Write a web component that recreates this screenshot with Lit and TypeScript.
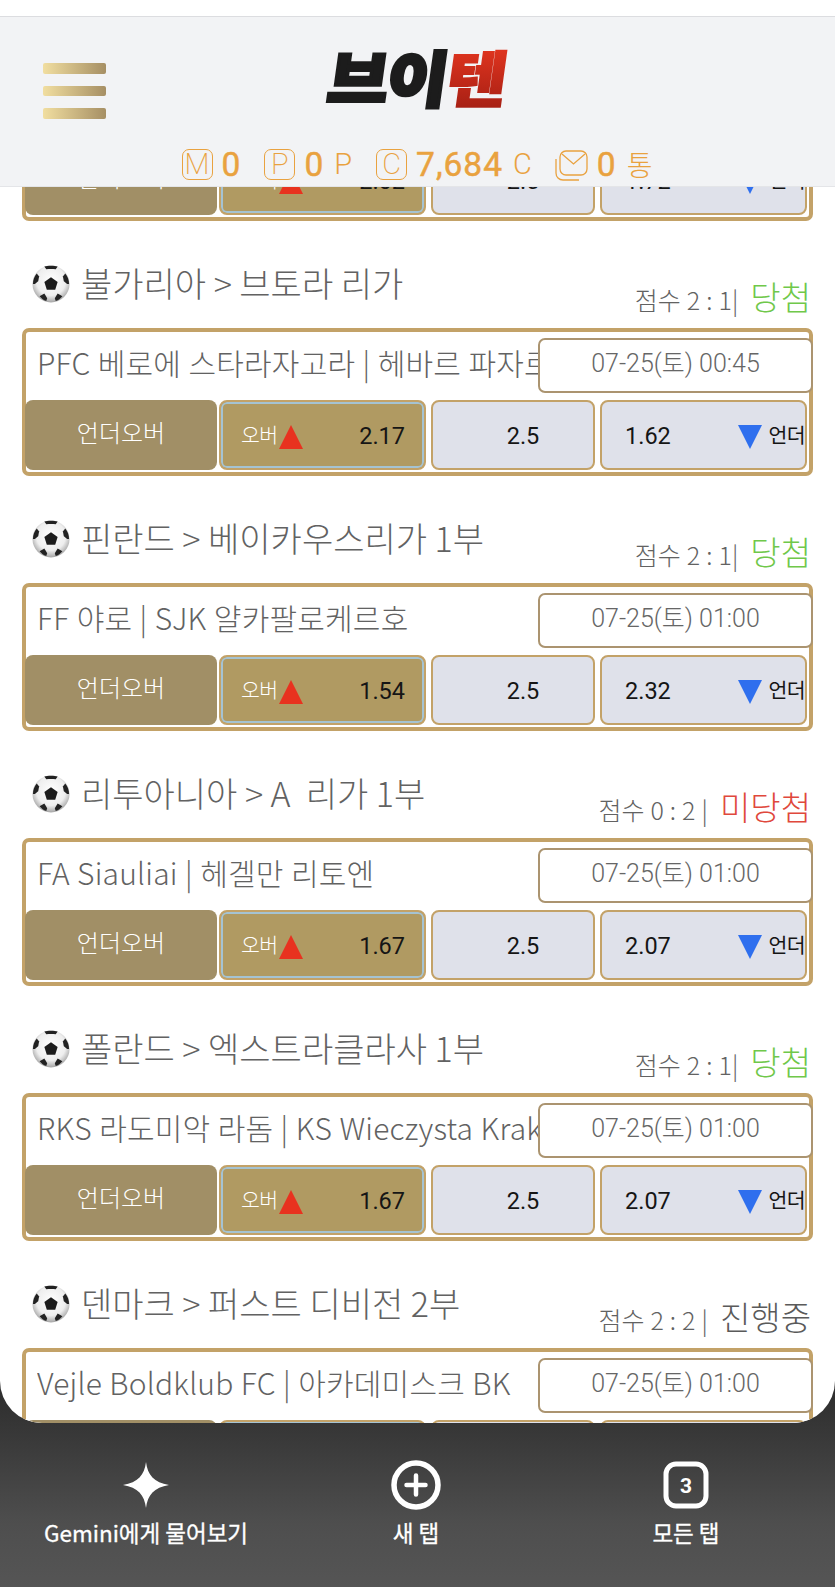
import { LitElement, html, css, svg } from "lit";
import { customElement } from "lit/decorators.js";

interface Match {
  league: string;
  score: string;
  result: string;
  kind: "win" | "lose" | "live";
  teams: string;
  date: string;
  over: string;
  line: string;
  under: string;
}

const MATCHES: Match[] = [
  { league: "", score: "", result: "", kind: "win", teams: "", date: "", over: "2.02", line: "2.5", under: "1.72" },
  { league: "불가리아 > 브토라 리가", score: "점수 2 : 1", result: "당첨", kind: "win", teams: "PFC 베로에 스타라자고라 | 헤바르 파자르", date: "07-25(토) 00:45", over: "2.17", line: "2.5", under: "1.62" },
  { league: "핀란드 > 베이카우스리가 1부", score: "점수 2 : 1", result: "당첨", kind: "win", teams: "FF 야로 | SJK 얄카팔로케르호", date: "07-25(토) 01:00", over: "1.54", line: "2.5", under: "2.32" },
  { league: "리투아니아 > A  리가 1부", score: "점수 0 : 2", result: "미당첨", kind: "lose", teams: "FA Siauliai | 헤겔만 리토엔", date: "07-25(토) 01:00", over: "1.67", line: "2.5", under: "2.07" },
  { league: "폴란드 > 엑스트라클라사 1부", score: "점수 2 : 1", result: "당첨", kind: "win", teams: "RKS 라도미악 라돔 | KS Wieczysta Krakow", date: "07-25(토) 01:00", over: "1.67", line: "2.5", under: "2.07" },
  { league: "덴마크 > 퍼스트 디비전 2부", score: "점수 2 : 2", result: "진행중", kind: "live", teams: "Vejle Boldklub FC | 아카데미스크 BK", date: "07-25(토) 01:00", over: "1.67", line: "2.5", under: "2.07" },
];

const ball = svg`
  <svg class="ball" viewBox="0 0 40 40" aria-hidden="true">
    <defs>
      <radialGradient id="bg" cx="50%" cy="42%" r="60%">
        <stop offset="0%" stop-color="#ffffff"/><stop offset="65%" stop-color="#eeeeee"/><stop offset="100%" stop-color="#9c9c9c"/>
      </radialGradient>
    </defs>
    <circle cx="20" cy="20" r="19.5" fill="url(#bg)"/>
    <path d="M20 13l7 5-2.600 8h-8.800L13 18z" fill="#1c1c1c"/>
    <path d="M13 1.600C16 .6 24 .6 27 1.600L25 4.600C22 4 18 4 15 4.600z" fill="#222"/>
    <path d="M1 20C1 16 2.500 12 5 9L7.500 12 6.500 17 3 20z" fill="#222"/>
    <path d="M39 20C39 16 37.500 12 35 9L32.500 12 33.500 17 37 20z" fill="#222"/>
    <path d="M8 33L13 30 16 35 15 38C12 37 10 35.500 8 33z" fill="#222"/>
    <path d="M32 33L27 30 24 35 25 38C28 37 30 35.500 32 33z" fill="#222"/>
  </svg>`;

@customElement("match-card")
class MatchCard extends LitElement {
  static properties = { m: { attribute: false } };
  m!: Match;

  static styles = css`
    :host {
      display: block;
      padding: 0 22px;
      height: 255px;
      font-family: "Noto Sans CJK KR", "Roboto", sans-serif;
      font-weight: 300;
      color: #626262;
    }
    .head {
      height: 107px;
      box-sizing: border-box;
      display: flex;
      justify-content: space-between;
      padding: 44px 2px 0 10px;
    }
    .league {
      display: flex;
      align-items: flex-start;
      gap: 11px;
      font-size: 34px;
      line-height: 36px;
      white-space: pre;
    }
    .ball {
      width: 38px;
      height: 38px;
      flex: none;
    }
    .score {
      align-self: flex-end;
      margin-bottom: 7px;
      display: flex;
      align-items: baseline;
      font-size: 25px;
      line-height: 44px;
      white-space: pre;
      word-spacing: 0.5px;
    }
    .res {
      font-size: 33px;
      margin-left: 6px;
      word-spacing: 0;
    }
    .win { color: #70c84a; }
    .lose { color: #e0483c; }
    .live { color: #5a5a5a; }
    .card {
      height: 148px;
      box-sizing: border-box;
      border: 4px solid #c3a268;
      border-radius: 7px;
      background: #fff;
      display: flex;
      flex-direction: column;
    }
    .top {
      height: 68px;
      display: flex;
      align-items: center;
      padding-left: 11px;
    }
    .teams {
      flex: 1;
      min-width: 0;
      overflow: hidden;
      white-space: nowrap;
      font-size: 30px;
      letter-spacing: 0.2px;
      word-spacing: 0.5px;
      padding-bottom: 8px;
    }
    .date {
      flex: none;
      width: 275px;
      height: 55px;
      margin: -1px -4px 0 0;
      padding-bottom: 10px;
      box-sizing: border-box;
      border: 2px solid #ab9470;
      border-radius: 7px;
      background: #fff;
      display: flex;
      align-items: center;
      justify-content: center;
      font-family: "Roboto", "Noto Sans CJK KR", sans-serif;
      font-size: 25px;
      font-weight: 300;
      color: #666;
      white-space: nowrap;
    }
    .row {
      display: flex;
      height: 70px;
      margin-left: -1px;
    }
    .btn {
      box-sizing: border-box;
      height: 70px;
      border-radius: 8px;
      display: flex;
      align-items: center;
      font-family: "Roboto", "Noto Sans CJK KR", sans-serif;
      font-size: 23.5px;
      font-weight: 400;
      color: #151515;
    }
    .name {
      width: 192px;
      margin-right: 2px;
      padding-bottom: 8px;
      background: #a18f66;
      color: #fff;
      justify-content: center;
      font-family: "Noto Sans CJK KR", sans-serif;
      font-size: 24px;
      font-weight: 300;
    }
    .over {
      width: 207px;
      margin-right: 5px;
      background: #b09a62;
      border: 2px solid #c3a268;
      box-shadow: inset 0 0 0 2px #a5c3d2;
      padding: 1px 19px 0 20px;
    }
    .line {
      width: 164px;
      margin-right: 5px;
      background: #dfe1ea;
      border: 2px solid #c3a268;
      justify-content: center;
      padding: 1px 0 0 20px;
    }
    .under {
      width: 207px;
      background: #dfe1ea;
      border: 2px solid #c3a268;
      padding: 1px 0 0 23px;
    }
    .small {
      font-family: "Noto Sans CJK KR", sans-serif;
      font-size: 20.5px;
      letter-spacing: -0.6px;
      padding-bottom: 4px;
    }
    .over .small { color: #fff; font-weight: 300; }
    .tri {
      width: 24px;
      height: 24px;
      flex: none;
      margin: 3px 0 0 1px;
    }
    .under .tri { margin: 2px 6px 0 auto; }
    .val { margin-left: auto; }
    .under .val { margin-left: 0; }
  `;

  render() {
    const m = this.m;
    return html`
      <div class="head">
        <div class="league">${m.league ? ball : ""}<span>${m.league}</span></div>
        <div class="score">${m.score ? m.score + (m.kind === "win" ? "| " : " | ") : ""}<span class="res ${m.kind}">${m.result}</span></div>
      </div>
      <div class="card">
        <div class="top">
          <div class="teams">${m.teams}</div>
          <div class="date">${m.date}</div>
        </div>
        <div class="row">
          <div class="btn name">언더오버</div>
          <div class="btn over">
            <span class="small">오버</span>
            <svg class="tri" viewBox="0 0 24 24"><path d="M12 0L24 24H0z" fill="#e8321f"/></svg>
            <span class="val">${m.over}</span>
          </div>
          <div class="btn line">${m.line}</div>
          <div class="btn under">
            <span class="val">${m.under}</span>
            <svg class="tri" viewBox="0 0 24 24"><path d="M0 0H24L12 24z" fill="#2f6fee"/></svg>
            <span class="small">언더</span>
          </div>
        </div>
      </div>
    `;
  }
}

@customElement("app-root")
class AppRoot extends LitElement {
  static styles = css`
    :host {
      display: block;
      position: relative;
      width: 835px;
      height: 1587px;
      overflow: hidden;
      background: linear-gradient(180deg, #2f2f2f 0%, #2f2f2f 88%, #4e4e4e 96%, #555555 100%);
      font-family: "Noto Sans CJK KR", "Roboto", sans-serif;
    }
    .view {
      height: 1423px;
      overflow: hidden;
      background: #fff;
      border-radius: 0 0 42px 42px;
    }
    .feed {
      margin-top: -34px;
    }
    .header {
      position: absolute;
      top: 16px;
      left: 0;
      right: 0;
      height: 171px;
      box-sizing: border-box;
      background: #f2f3f5;
      border-top: 1px solid #dcdde0;
      border-bottom: 1px solid #e4e5e8;
      display: flex;
      flex-direction: column;
    }
    .brand {
      height: 129px;
      box-sizing: border-box;
      display: grid;
      grid-template-columns: 1fr auto 1fr;
      align-items: start;
      padding: 28px 43px 0;
    }
    .menu {
      width: 63px;
      display: flex;
      flex-direction: column;
      gap: 12px;
      margin-top: 18px;
    }
    .menu i {
      display: block;
      height: 10.500px;
      border-radius: 2px;
      background: linear-gradient(90deg, #f1dea0 0%, #a68f64 100%);
    }
    .logo {
      font-family: "Noto Sans CJK KR", sans-serif;
      font-weight: 900;
      font-size: 66px;
      line-height: 60px;
      letter-spacing: -1.500px;
      color: #1c1c1c;
      -webkit-text-stroke: 3.500px currentColor;
      transform: skewX(-8deg) scaleY(0.92);
      white-space: nowrap;
    }
    .logo span {
      background: linear-gradient(180deg, #f03a22 0%, #9d1c12 100%);
      -webkit-background-clip: text;
      background-clip: text;
      color: transparent;
      -webkit-text-stroke: 2px transparent;
    }
    .status {
      display: flex;
      align-items: center;
      justify-content: center;
      color: #e9a23f;
      font-family: "Roboto", "Noto Sans CJK KR", sans-serif;
      height: 36px;
      margin-left: -1px;
    }
    .box {
      width: 31px;
      height: 31px;
      box-sizing: border-box;
      border: 1.300px solid #e9a23f;
      border-radius: 7px;
      display: flex;
      align-items: center;
      justify-content: center;
      font-weight: 200;
      font-size: 29px;
      line-height: 1;
    }
    .num {
      font-size: 33.500px;
      font-weight: 400;
      -webkit-text-stroke: 0.500px #e9a23f;
      letter-spacing: 1px;
      margin-left: 9px;
    }
    .unit {
      font-weight: 300;
      font-size: 29px;
      margin-left: 10px;
    }
    .kr {
      font-family: "Noto Sans CJK KR", sans-serif;
      font-size: 28px;
    }
    .s1 { margin-left: 23px; }
    .s2 { margin-left: 24px; }
    .s3 { margin-left: 23px; }
    .mail {
      width: 33px;
      height: 33px;
      display: block;
    }
    .tabs {
      display: grid;
      grid-template-columns: repeat(3, 270px);
      padding: 37px 0 0 11px;
      color: #fff;
    }
    .tab {
      display: flex;
      flex-direction: column;
      align-items: center;
    }
    .tab svg {
      width: 50px;
      height: 50px;
      display: block;
    }
    .tab span {
      font-size: 22.500px;
      font-weight: 400;
      -webkit-text-stroke: 0.300px #fff;
      line-height: 30px;
      margin-top: 7px;
      white-space: nowrap;
    }
    .three {
      font-family: "Roboto", sans-serif;
      font-weight: 700;
      font-size: 21px;
      fill: #fff;
    }
  `;

  render() {
    return html`
      <div class="view">
        <div class="feed">
          ${MATCHES.map((m) => html`<match-card .m=${m}></match-card>`)}
        </div>
      </div>
      <div class="header">
        <div class="brand">
          <div class="menu"><i></i><i></i><i></i></div>
          <div class="logo">브이<span>텐</span></div>
          <div></div>
        </div>
        <div class="status">
          <span class="box">M</span><span class="num">0</span>
          <span class="box s1">P</span><span class="num">0</span><span class="unit">P</span>
          <span class="box s2">C</span><span class="num">7,684</span><span class="unit">C</span>
          <svg class="mail s3" viewBox="0 0 33 33" fill="none" stroke="#e9a23f" stroke-width="1.300">
            <rect x="5" y="3" width="27" height="24" rx="6"/>
            <path d="M7 6l11.500 10L30 6"/>
            <path d="M1 11v14c0 4 3 7 7 7h16"/>
          </svg>
          <span class="num">0</span><span class="unit kr">통</span>
        </div>
      </div>
      <div class="tabs">
        <div class="tab">
          <svg viewBox="0 0 50 50"><path d="M25 2C26.500 15 33 22.500 48 25 33 27.500 26.500 35 25 48 23.500 35 17 27.500 2 25 17 22.500 23.500 15 25 2z" fill="#fff"/></svg>
          <span>Gemini에게 물어보기</span>
        </div>
        <div class="tab">
          <svg viewBox="0 0 50 50" fill="none" stroke="#fff"><circle cx="25" cy="25" r="22" stroke-width="5.500"/><path d="M25 15.500v19M15.500 25h19" stroke-width="4.500" stroke-linecap="round"/></svg>
          <span>새 탭</span>
        </div>
        <div class="tab">
          <svg viewBox="0 0 50 50" fill="none"><rect x="5" y="4" width="40" height="42" rx="10" stroke="#fff" stroke-width="5"/><text class="three" x="25" y="32.500" text-anchor="middle">3</text></svg>
          <span>모든 탭</span>
        </div>
      </div>
    `;
  }
}
